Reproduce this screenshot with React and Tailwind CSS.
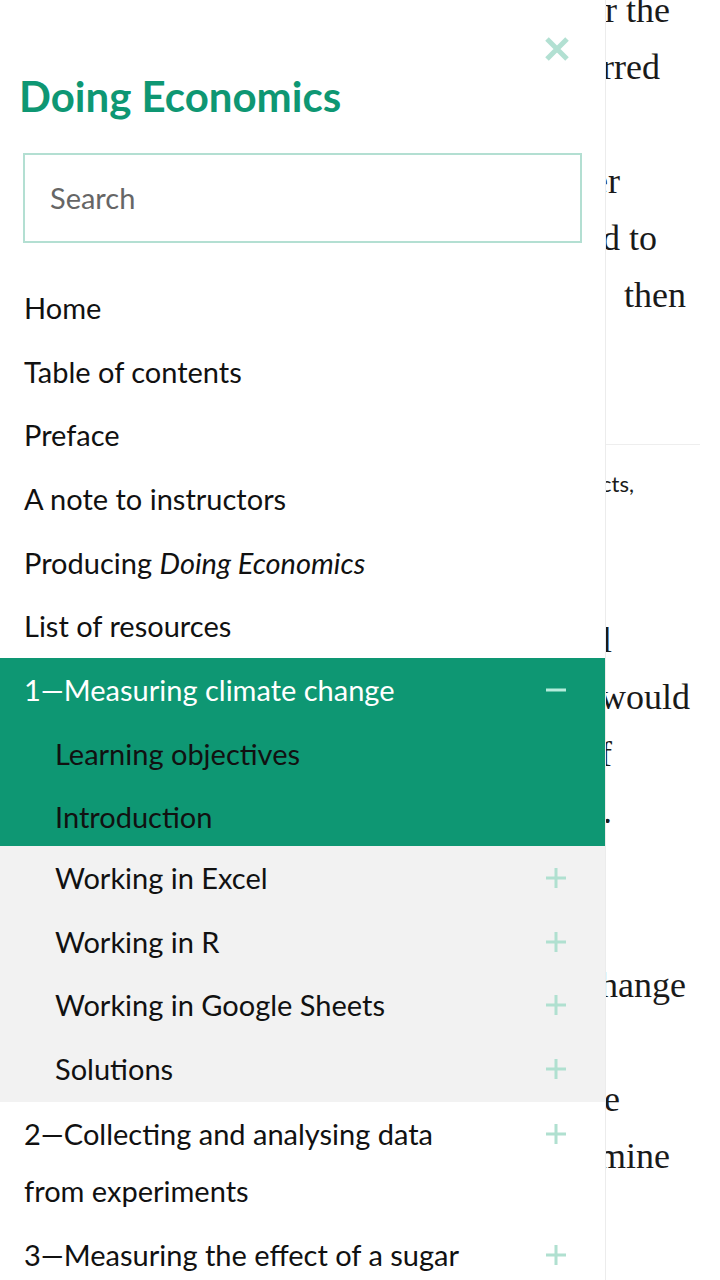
import React from "react";

const sans = { fontFamily: "Lato, 'Noto Sans', sans-serif" };
const serif = { fontFamily: "'Liberation Serif', serif" };

function Plus() {
  return (
    <svg width="22" height="22" viewBox="0 0 22 22" className="shrink-0">
      <path d="M11 1v20M1 11h20" stroke="#b0e0d0" strokeWidth="3" />
    </svg>
  );
}

function Minus() {
  return (
    <svg width="22" height="22" viewBox="0 0 22 22" className="shrink-0">
      <path d="M1 11h20" stroke="#b5ecdc" strokeWidth="3" />
    </svg>
  );
}

function Row({ children, indent, icon, className = "" }) {
  return (
    <div className={`flex items-start justify-between py-[3.3px] pr-[38px] ${indent ? "pl-[55px]" : "pl-[24px]"} ${className}`}>
      <span className="leading-[57px]">{children}</span>
      {icon && <span className="mt-[18px]">{icon}</span>}
    </div>
  );
}

// a line of the page behind the menu, right edge at `w`
function Line({ w, children }) {
  return (
    <div className={`leading-[57px] h-[57px] text-right whitespace-nowrap ${w}`}>{children}</div>
  );
}

const topItems = [
  "Home",
  "Table of contents",
  "Preface",
  "A note to instructors",
  null,
  "List of resources",
];

export default function App() {
  return (
    <div className="relative w-[720px] h-[1280px] overflow-hidden bg-white">
      {/* page behind the menu */}
      <div className="absolute top-0 left-0 w-[720px] text-[36px] text-[#1a1a1a]" style={serif}>
        <div className="-mt-[18px]">
          <Line w="w-[670px]">after the</Line>
          <Line w="w-[660px]">occurred</Line>
          <Line w="w-[660px]">&nbsp;</Line>
          <Line w="w-[620px]">other</Line>
          <Line w="w-[657px]">tend to</Line>
          <Line w="w-[686px]">then</Line>
        </div>
        <div className="h-[120px]" />
        <div className="h-px bg-[#eeeeee] ml-[606px] w-[94px]" />
        <div className="text-[22px] leading-[30px] mt-[24px] w-[634px] text-right" style={sans}>facts,</div>
        <div className="h-[113px]" />
        <Line w="w-[612px]">total</Line>
        <Line w="w-[690px]">it would</Line>
        <Line w="w-[612px]">of</Line>
        <Line w="w-[612px]">there.</Line>
        <Line w="w-[612px]">&nbsp;</Line>
        <Line w="w-[612px]">&nbsp;</Line>
        <div className="mt-[3px]">
          <Line w="w-[686px]">climate change</Line>
        </div>
        <Line w="w-[612px]">&nbsp;</Line>
        <Line w="w-[620px]">the</Line>
        <Line w="w-[670px]">examine</Line>
      </div>

      {/* side menu */}
      <div className="absolute top-0 left-0 w-[606px] h-[1280px] bg-white border-r border-[#ececec] text-[29px] text-[#111]" style={sans}>
        <div className="flex justify-end pr-[35px] pt-[36px]">
          <svg width="26" height="26" viewBox="0 0 26 26">
            <path d="M3 3l20 20M23 3L3 23" stroke="#b2e0d2" strokeWidth="5" />
          </svg>
        </div>
        <div className="pl-[19px] mt-[10px] text-[42px] font-bold text-[#0e9773] leading-[48px]">Doing Economics</div>
        <div className="mx-[23px] mt-[33px] h-[90px] border-2 border-[#b3dfd2] flex items-center pl-[25px] text-[#666]">
          Search
        </div>
        <div className="mt-[33px] h-[382px]">
          {topItems.map((t, i) =>
            t ? (
              <Row key={i}>{t}</Row>
            ) : (
              <Row key={i}>
                Producing <i>Doing Economics</i>
              </Row>
            )
          )}
        </div>
        <div className="bg-[#0e9773] h-[188px] overflow-hidden">
          <Row icon={<Minus />} className="text-white">1—Measuring climate change</Row>
          <Row indent>Learning objectives</Row>
          <Row indent>Introduction</Row>
        </div>
        <div className="bg-[#f2f2f2] h-[256px] overflow-hidden">
          <Row indent icon={<Plus />}>Working in Excel</Row>
          <Row indent icon={<Plus />}>Working in R</Row>
          <Row indent icon={<Plus />}>Working in Google Sheets</Row>
          <Row indent icon={<Plus />}>Solutions</Row>
        </div>
        <Row icon={<Plus />}>
          2—Collecting and analysing data
          <br />
          from experiments
        </Row>
        <Row icon={<Plus />}>3—Measuring the effect of a sugar</Row>
      </div>
    </div>
  );
}
